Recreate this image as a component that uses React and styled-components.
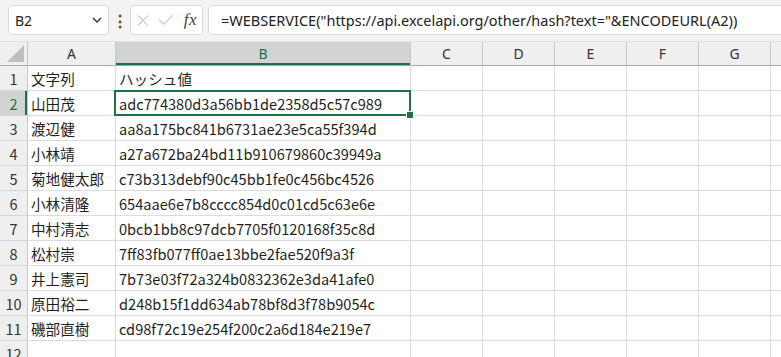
import React from 'react'
import styled, { createGlobalStyle } from 'styled-components'

const GREEN = '#1e7145'

const GlobalStyle = createGlobalStyle`
  html, body {
    margin: 0;
    padding: 0;
    background: #ffffff;
    overflow: hidden;
  }
  body {
    width: 781px;
    height: 357px;
    font-family: "Noto Sans CJK JP", "Noto Sans", sans-serif;
  }
`

const Toolbar = styled.div`
  display: flex;
  align-items: flex-start;
  height: 42px;
  padding: 5px 0 0 8px;
  box-sizing: border-box;
  background: #f3f3f3;
  border-bottom: 1px solid #e4e4e4;
  overflow: hidden;
`

const Box = styled.div`
  display: flex;
  align-items: center;
  height: 30px;
  box-sizing: border-box;
  background: #ffffff;
  border: 1px solid #d9d9d9;
  border-radius: 4px;
`

const NameBox = styled(Box)`
  width: 101px;
  justify-content: space-between;
  padding: 0 6px 0 6px;
  font-family: "Noto Sans", sans-serif;
  font-size: 14px;
  color: #222;
`

const Dots = styled.div`
  width: 21px;
  height: 30px;
  display: flex;
  justify-content: center;
  align-items: center;
  font-size: 16px;
  font-weight: bold;
  color: #444;
`

const FuncBox = styled(Box)`
  width: 73px;
  padding: 0 5px 0 6px;
  gap: 9px;
`

const Fx = styled.span`
  font-family: "Liberation Serif", serif;
  font-style: italic;
  font-size: 17px;
  color: #444;
  margin-left: 1px;
  letter-spacing: 0.5px;
`

const FormulaBox = styled(Box)`
  flex: 1;
  margin-left: 5px;
  margin-right: -10px;
  padding-left: 12px;
  font-family: "Noto Sans", sans-serif;
  font-size: 14.5px;
  color: #222;
  white-space: nowrap;
  border-radius: 4px 0 0 4px;
`

const Sheet = styled.div`
  display: grid;
  grid-template-columns: 28px 88px 295px 72px 72px 72px 72px 72px 40px;
  grid-auto-rows: 25px;
  grid-template-rows: 24px;
`

const Cell = styled.div`
  position: relative;
  box-sizing: border-box;
  border-right: 1px solid #dcdcdc;
  border-bottom: 1px solid #dcdcdc;
  display: flex;
  align-items: center;
  padding-left: 3px;
  font-size: 14.6px;
  color: #1f1f1f;
  white-space: nowrap;
`

const ColHead = styled.div`
  box-sizing: border-box;
  display: flex;
  align-items: center;
  justify-content: center;
  background: ${(p) => (p.$active ? '#d3d3d3' : '#efefef')};
  color: ${(p) => (p.$active ? GREEN : '#333')};
  border-right: 1px solid #c8c8c8;
  border-bottom: 1px solid #a8a8a8;
  box-shadow: ${(p) => (p.$active ? `inset 0 -2px 0 ${GREEN}` : 'none')};
  font-family: "Noto Sans", sans-serif;
  font-size: 14px;
  padding-bottom: 1px;
`

const Corner = styled(ColHead)`
  align-items: flex-end;
  justify-content: flex-end;
  padding: 0 3px 3px 0;
`

const Triangle = styled.span`
  width: 17px;
  height: 17px;
  background: #bfbfbf;
  clip-path: polygon(100% 0, 100% 100%, 0 100%);
`

const RowHead = styled.div`
  box-sizing: border-box;
  display: flex;
  align-items: center;
  justify-content: center;
  background: ${(p) => (p.$active ? '#d3d3d3' : '#efefef')};
  color: ${(p) => (p.$active ? GREEN : '#333')};
  border-right: 1px solid #c8c8c8;
  border-bottom: 1px solid #d6d6d6;
  box-shadow: ${(p) => (p.$active ? `inset -2px 0 0 ${GREEN}` : 'none')};
  font-size: 14.5px;
`

const Selection = styled.div`
  position: absolute;
  top: -1px;
  left: -2px;
  width: calc(100% + 3px);
  height: calc(100% + 2px);
  box-sizing: border-box;
  border: 2px solid ${GREEN};
  pointer-events: none;
  z-index: 2;
`

const Handle = styled.div`
  position: absolute;
  right: -4px;
  bottom: -4px;
  width: 6px;
  height: 6px;
  background: ${GREEN};
  outline: 1px solid #ffffff;
`

const columns = ['A', 'B', 'C', 'D', 'E', 'F', 'G', '']

const rows = [
  ['文字列', 'ハッシュ値'],
  ['山田茂', 'adc774380d3a56bb1de2358d5c57c989'],
  ['渡辺健', 'aa8a175bc841b6731ae23e5ca55f394d'],
  ['小林靖', 'a27a672ba24bd11b910679860c39949a'],
  ['菊地健太郎', 'c73b313debf90c45bb1fe0c456bc4526'],
  ['小林清隆', '654aae6e7b8cccc854d0c01cd5c63e6e'],
  ['中村清志', '0bcb1bb8c97dcb7705f0120168f35c8d'],
  ['松村崇', '7ff83fb077ff0ae13bbe2fae520f9a3f'],
  ['井上憲司', '7b73e03f72a324b0832362e3da41afe0'],
  ['原田裕二', 'd248b15f1dd634ab78bf8d3f78b9054c'],
  ['磯部直樹', 'cd98f72c19e254f200c2a6d184e219e7'],
  ['', ''],
]

const Cross = () => (
  <svg width="13" height="13" viewBox="0 0 13 13">
    <path d="M1 1 L12 12 M12 1 L1 12" stroke="#c6c6c6" strokeWidth="1.2" fill="none" />
  </svg>
)

const Check = () => (
  <svg width="17" height="12" viewBox="0 0 17 12">
    <path d="M1 5.5 L6 10.5 L16 1" stroke="#c6c6c6" strokeWidth="1.2" fill="none" />
  </svg>
)

const Chevron = () => (
  <svg width="10" height="6" viewBox="0 0 10 6">
    <path d="M1 1 L5 5 L9 1" stroke="#333" strokeWidth="1.4" fill="none" />
  </svg>
)

export default function App() {
  return (
    <>
      <GlobalStyle />
      <Toolbar>
        <NameBox>
          <span>B2</span>
          <Chevron />
        </NameBox>
        <Dots>⋮</Dots>
        <FuncBox>
          <Cross />
          <Check />
          <Fx>fx</Fx>
        </FuncBox>
        <FormulaBox>=WEBSERVICE("https://api.excelapi.org/other/hash?text="&amp;ENCODEURL(A2))</FormulaBox>
      </Toolbar>
      <Sheet>
        <Corner>
          <Triangle />
        </Corner>
        {columns.map((c, i) => (
          <ColHead key={i} $active={c === 'B'}>
            {c}
          </ColHead>
        ))}
        {rows.map((r, ri) => (
          <React.Fragment key={ri}>
            <RowHead $active={ri === 1}>{ri + 1}</RowHead>
            <Cell>{r[0]}</Cell>
            <Cell>
              {r[1]}
              {ri === 1 && (
                <Selection>
                  <Handle />
                </Selection>
              )}
            </Cell>
            {columns.slice(2).map((c, ci) => (
              <Cell key={ci} />
            ))}
          </React.Fragment>
        ))}
      </Sheet>
    </>
  )
}
